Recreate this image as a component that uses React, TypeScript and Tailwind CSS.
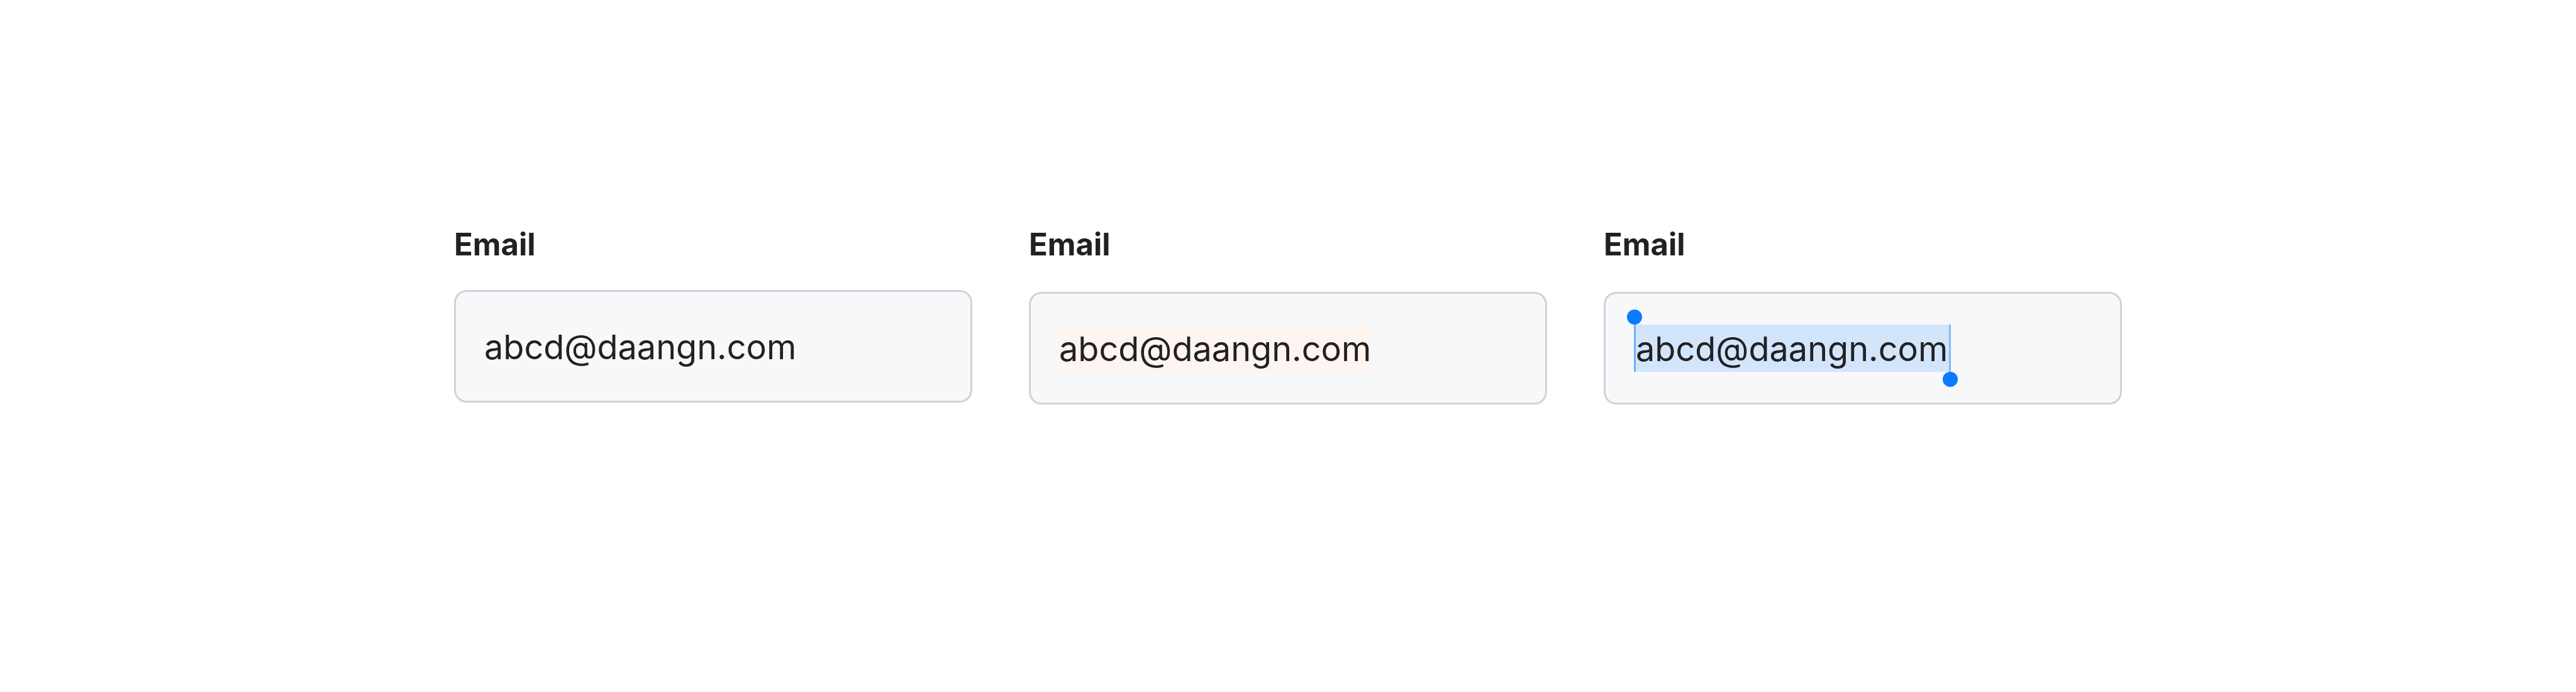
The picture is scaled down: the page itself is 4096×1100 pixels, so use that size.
import { useId, type ReactNode } from "react";

const VALUE = "abcd@daangn.com";

const labelStyle = "text-[49px] leading-[60px] font-bold text-[#212124]";
const boxStyle =
  "flex w-full items-center rounded-[20px] border-[3px] border-[#d1d2d8] bg-[#f7f8fa] px-[45px] py-[49px]";
const inputStyle =
  "block h-[75px] pt-[2px] text-[54px] leading-[73px] text-[#212124] outline-none";

type FieldProps = {
  spacing: string;
  children: (id: string) => ReactNode;
};

function Field({ spacing, children }: FieldProps) {
  const id = useId();
  return (
    <div className={`flex min-w-0 flex-col items-start ${spacing}`}>
      <label htmlFor={id} className={labelStyle}>
        Email
      </label>
      <div className={boxStyle}>{children(id)}</div>
    </div>
  );
}

export default function App() {
  return (
    <main className="min-h-screen bg-white px-10 pt-[359px] font-['Inter',sans-serif]">
      <div className="mx-auto grid w-full max-w-[2652px] grid-cols-3 gap-[90px]">
        <Field spacing="gap-[42px]">
          {(id) => (
            <input
              id={id}
              type="text"
              defaultValue={VALUE}
              className={`${inputStyle} w-full bg-transparent`}
            />
          )}
        </Field>

        <Field spacing="gap-[45px]">
          {(id) => (
            <input
              id={id}
              type="text"
              defaultValue={VALUE}
              className={`${inputStyle} field-sizing-content bg-[#fff5f0]`}
            />
          )}
        </Field>

        <Field spacing="gap-[45px]">
          {(id) => (
            <div className="relative border-x-[3px] border-l-[#6eb0ff] border-r-[#80b9ff] bg-[#d3e5fb] pr-[2px]">
              <input
                id={id}
                type="text"
                defaultValue={VALUE}
                className={`${inputStyle} field-sizing-content bg-transparent`}
              />
              <span className="absolute bottom-full -left-[14px] size-6 rounded-full bg-[#0a7aff]" />
              <span className="absolute top-full -right-[14px] size-6 rounded-full bg-[#0a7aff]" />
            </div>
          )}
        </Field>
      </div>
    </main>
  );
}
